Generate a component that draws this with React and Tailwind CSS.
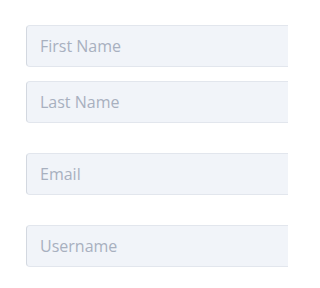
import React from 'react';

export default function App() {
    const fields = [
        { name: 'first', placeholder: 'First Name', gap: 'mt-[25px]' },
        { name: 'last', placeholder: 'Last Name', gap: 'mt-[14px]' },
        { name: 'email', placeholder: 'Email', gap: 'mt-[30px]' },
        { name: 'username', placeholder: 'Username', gap: 'mt-[30px]' },
    ];

    return (
        <div className="w-[288px] h-[288px] overflow-hidden bg-white font-['Open_Sans',sans-serif]">
            {fields.map((field) => (
                <div key={field.name} className={`${field.gap} ml-[26px] w-[290px]`}>
                    <input
                        type="text"
                        name={field.name}
                        placeholder={field.placeholder}
                        className="block w-full h-[42px] rounded-[4px] border border-[#e2e6ed] border-l-[#d3d8e0] bg-[#f1f4f9] pl-[13px] text-[16px] text-[#4a5568] placeholder:text-[#a8b0bf] outline-none"
                    />
                </div>
            ))}
        </div>
    );
}
